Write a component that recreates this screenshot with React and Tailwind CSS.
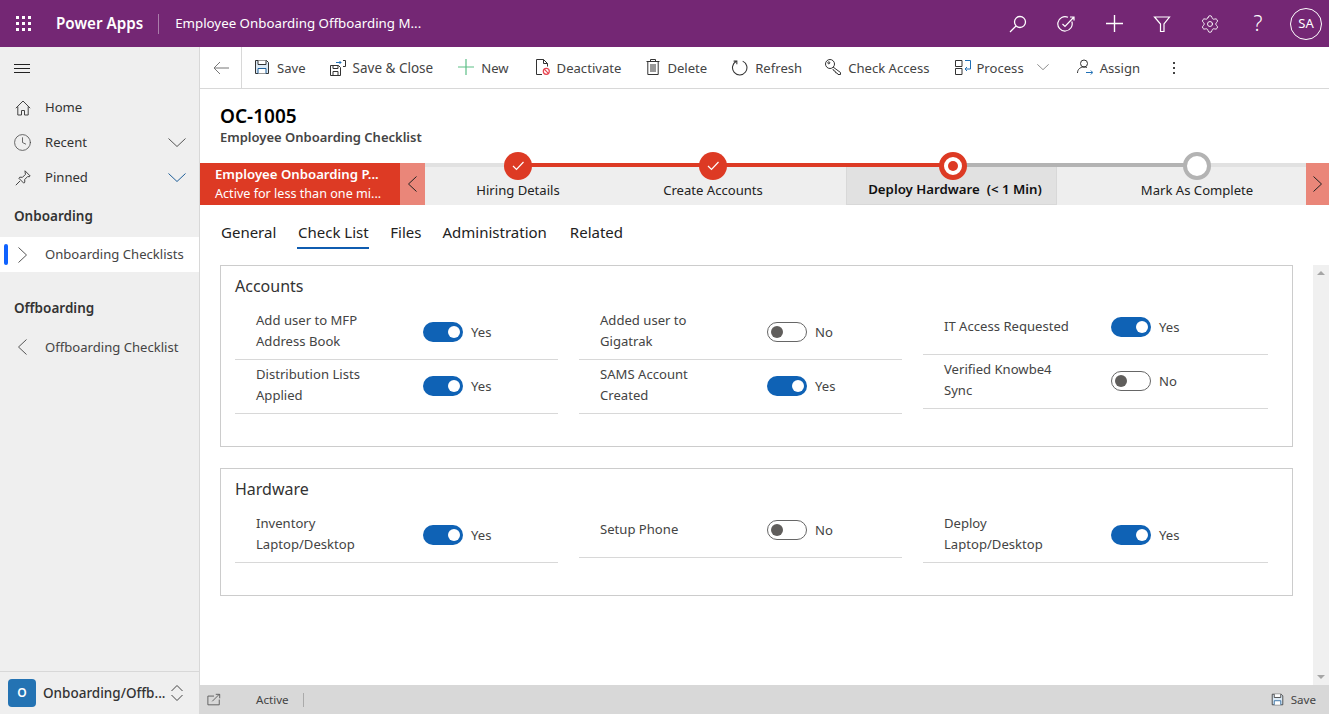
import { Clock, Settings } from 'lucide-react';

const Ico = ({ size = 16, children, className = '' }) => (
  <svg width={size} height={size} viewBox="0 0 16 16" fill="none" stroke="currentColor" strokeWidth="1" className={className}>
    {children}
  </svg>
);

const ChevDown = ({ className = '', width = 18, height = 9 }) => (
  <svg width={width} height={height} viewBox="0 0 18 9" fill="none" stroke="currentColor" className={className}>
    <path d="M.5 .5L9 8.500 17.500 .5" />
  </svg>
);

const ChevRight = ({ className = '' }) => (
  <svg width="9" height="16" viewBox="0 0 9 16" fill="none" stroke="currentColor" className={className}>
    <path d="M.5 .5L8.500 8 .5 15.500" />
  </svg>
);

const ChevLeft = ({ className = '' }) => (
  <svg width="9" height="16" viewBox="0 0 9 16" fill="none" stroke="currentColor" className={className}>
    <path d="M8.500 .5L.5 8l8 7.500" />
  </svg>
);

const PlusIcon = ({ size = 16, className = '', strokeWidth = 1.2 }) => (
  <svg width={size} height={size} viewBox="0 0 16 16" fill="none" stroke="currentColor" strokeWidth={strokeWidth} className={className}>
    <path d="M8 0v16M0 8h16" />
  </svg>
);

const HomeIcon = () => (
  <Ico>
    <path d="M.8 8.200L8 1l7.200 7.200M2.800 6.500v8.500h3.700v-4.500h3v4.500h3.700V6.500" />
  </Ico>
);

const PinIcon = () => (
  <Ico>
    <path d="M10 .8l5.200 5.200-1 .8-1.500-.3-3 3 .1 2.700-1 1-5-5 1-1 2.700.1 3-3-.3-1.500zM5 11L.8 15.200" />
  </Ico>
);

const TrashIcon = () => (
  <svg width="14" height="16" viewBox="0 0 14 16" fill="none" stroke="#333">
    <path d="M.5 2.500h13M4.500 2.500v-2h5v2M1.800 2.500v13h10.400v-13M5 5v8M7 5v8M9 5v8" />
  </svg>
);

const KeyIcon = () => (
  <Ico>
    <circle cx="5" cy="5" r="4.500" stroke="#333" />
    <circle cx="3.800" cy="3.800" r="1" stroke="#333" />
    <path d="M8 8l7.500 5.500v2h-2.500l-1-1.500-1.500-.3-.3-1.500-1.500-.5-.8-1.700" stroke="#333" />
  </Ico>
);

const SaveIcon = ({ size = 16 }) => (
  <Ico size={size}>
    <path d="M1.500 1.500h11l2 2v11h-13z" stroke="#333" fill="#dbe9f5" />
    <path d="M4 1.500v4h8v-4" stroke="#333" fill="#fff" />
    <path d="M4 14.500v-5h8v5" stroke="#1f5f99" fill="#fff" />
  </Ico>
);

const SaveCloseIcon = () => (
  <Ico>
    <path d="M.5 5.500h8l2 2v8H.5z" stroke="#333" />
    <path d="M3 5.500v3h5v-3M3 15.500v-4h5v4" stroke="#333" />
    <path d="M6 2.500h5M9.500 1L11 2.500 9.500 4" stroke="#1f6fb5" />
    <path d="M13 .5h2.500v6H13" stroke="#333" />
  </Ico>
);

const DeactivateIcon = () => (
  <Ico>
    <path d="M8 15.500H2.500V.5h7l4 4v3M9.500 .5v4h4" stroke="#333" />
    <circle cx="12.300" cy="12.300" r="3" stroke="#e8434f" strokeWidth="1.200" />
    <path d="M10.200 10.200l4.200 4.200" stroke="#e8434f" strokeWidth="1.200" />
  </Ico>
);

const RefreshIcon = () => (
  <Ico size={17}>
    <path d="M5 2.200A6.800 6.800 0 1 0 11 2" stroke="#333" />
    <path d="M5.500 5V2H2.500" stroke="#333" />
  </Ico>
);

const ProcessIcon = () => (
  <Ico>
    <path d="M.5 1.500H7v6H.5zM.5 9.500H7v6H.5z" stroke="#333" />
    <path d="M10 1.500h5.500V10H10M12 8l-2 2 2 2" stroke="#1f6fb5" />
  </Ico>
);

const AssignIcon = () => (
  <Ico>
    <circle cx="7" cy="4.500" r="3.500" stroke="#333" />
    <path d="M.5 14c0-3.500 2.500-6 6.500-6 1 0 2 .2 2.800 .6" stroke="#333" />
    <path d="M9 13.500h6.500M13.800 11.500l2 2-2 2" stroke="#1f6fb5" />
  </Ico>
);

const TargetIcon = () => (
  <svg width="18" height="18" viewBox="0 0 18 18" fill="none" stroke="currentColor" strokeWidth="1.2">
    <path d="M14.800 6.500A7.200 7.200 0 1 1 11 2.300" />
    <path d="M5.500 9L8 11.500 16.500 2.500M13 2h4v3.500" />
  </svg>
);

const FunnelIcon = () => (
  <svg width="18" height="18" viewBox="0 0 18 18" fill="none" stroke="currentColor" strokeWidth="1.2">
    <path d="M1.500 2h15L11 9v7.500H7.500V9z" />
  </svg>
);

const SearchIcon = () => (
  <svg width="18" height="18" viewBox="0 0 18 18" fill="none" stroke="currentColor" strokeWidth="1.3">
    <circle cx="11" cy="7" r="5.500" />
    <path d="M7 11l-6 6" />
  </svg>
);

const PopoutIcon = () => (
  <Ico size={14}>
    <path d="M8 3.500H1v10h13v-6" stroke="#555" />
    <path d="M6 9.500L14 1.500M10 1.500h4.500V6" stroke="#555" />
  </Ico>
);

const Cmd = ({ icon, label, className = 'gap-[7px]' }) => (
  <div className={`flex items-center ${className}`}>
    {icon}
    <span className="pt-[2px]">{label}</span>
  </div>
);

const NavItem = ({ icon, label, chevron }) => (
  <div className="flex items-center h-[35px] pl-[15px] pr-[13px]">
    <span className="w-[30px] text-[#444]">{icon}</span>
    <span className="flex-1">{label}</span>
    {chevron}
  </div>
);

const Toggle = ({ on }) =>
  on ? (
    <span className="flex items-center justify-end shrink-0 w-10 h-5 pr-[3px] rounded-full bg-[#0f62b5]">
      <span className="w-3 h-3 rounded-full bg-white" />
    </span>
  ) : (
    <span className="flex items-center shrink-0 w-10 h-5 pl-[3px] rounded-full border border-[#666] bg-white">
      <span className="w-3 h-3 rounded-full bg-[#605e5c]" />
    </span>
  );

const Field = ({ label, on, short }) => (
  <div className={`flex items-center border-b border-[#d8d8d8] ${short ? 'h-[48px] pb-[7px]' : 'h-[53px] pb-[2px]'}`}>
    <div className={`w-[188px] shrink-0 pl-[21px] pr-[35px] leading-[21px] text-[#444] ${short ? 'mb-px' : 'mb-[3px]'}`}>{label}</div>
    <Toggle on={on} />
    <span className="ml-2 pt-px text-[#444]">{on ? 'Yes' : 'No'}</span>
  </div>
);

const Col = ({ children }) => <div className="flex flex-col gap-px">{children}</div>;

const Stage = ({ className, label, node, nodeClass, bold }) => (
  <div className={`relative flex items-center justify-center h-[38px] pt-[9px] ${className} ${bold ? 'font-semibold text-[13.25px] pl-[7px] text-[#111]' : 'text-[#222]'}`}>
    <div className={`absolute top-[-15px] w-7 h-7 rounded-full ${nodeClass}`}>{node}</div>
    <span className="whitespace-pre">{label}</span>
  </div>
);

const DoneCheck = () => (
  <svg viewBox="0 0 28 28" className="w-7 h-7" fill="none" stroke="#fff" strokeWidth="1.2">
    <path d="M9 14l3.500 3.500L19.500 10" />
  </svg>
);

export default function App() {
  return (
    <div className="w-[1329px] h-[714px] overflow-hidden flex flex-col bg-white text-[13.1px] text-[#333] font-['Noto_Sans',sans-serif]">
      <header className="h-[47px] shrink-0 flex items-center bg-[#742774] text-white">
        <div className="grid grid-cols-3 gap-[3px] ml-[16px] w-[15px]">
          {[...Array(9)].map((_, i) => (
            <span key={i} className="w-[3px] h-[3px] bg-white" />
          ))}
        </div>
        <span className="ml-[25px] text-[15.2px] font-semibold">Power Apps</span>
        <span className="ml-[15px] w-px h-5 bg-white/40" />
        <span className="ml-[16px] text-[13.3px]">Employee Onboarding Offboarding M...</span>
        <div className="ml-auto flex items-center h-full">
          <div className="flex items-center justify-center w-12 h-full"><SearchIcon /></div>
          <div className="flex items-center justify-center w-12 h-full"><TargetIcon /></div>
          <div className="flex items-center justify-center w-12 h-full"><PlusIcon size={17} strokeWidth={1.3} /></div>
          <div className="flex items-center justify-center w-12 h-full"><FunnelIcon /></div>
          <div className="flex items-center justify-center w-12 h-full"><Settings size={20} strokeWidth={1.1} /></div>
          <div className="flex items-center justify-center w-12 h-full text-[21px] font-light">?</div>
          <div className="flex items-center justify-center w-8 h-8 ml-2 mr-[7px] rounded-full border border-white text-[13px]">SA</div>
        </div>
      </header>

      <div className="flex flex-1 min-h-0">
        <aside className="w-[200px] shrink-0 flex flex-col bg-[#efefef] border-r border-[#d8d8d8]">
          <div className="flex flex-col gap-[3px] h-[42px] justify-center pl-[14px]">
            <span className="w-4 h-px bg-[#222]" />
            <span className="w-4 h-px bg-[#222]" />
            <span className="w-4 h-px bg-[#222]" />
          </div>
          <div className="mt-[1px]">
            <NavItem icon={<HomeIcon />} label="Home" />
            <NavItem icon={<Clock size={19} strokeWidth={1} className="-ml-[2px]" />} label="Recent" chevron={<ChevDown className="text-[#555]" />} />
            <NavItem icon={<PinIcon />} label="Pinned" chevron={<ChevDown className="text-[#1f5f99]" />} />
          </div>
          <div className="mt-[3px] h-[36px] flex items-center pl-[14px] text-[13.5px] font-semibold text-[#333]">Onboarding</div>
          <div className="relative mt-[3px] flex items-center h-[35px] bg-white pl-[18px]">
            <span className="absolute left-[4px] top-[7px] w-1 h-[21px] rounded-sm bg-[#0f62fe]" />
            <span className="w-[27px] text-[#555]"><ChevRight /></span>
            <span className="pt-px text-[#444]">Onboarding Checklists</span>
          </div>
          <div className="mt-[17px] h-[38px] flex items-center pl-[14px] text-[13.5px] font-semibold text-[#333]">Offboarding</div>
          <div className="flex items-center h-[40px] pl-[18px]">
            <span className="w-[27px] text-[#555]"><ChevLeft /></span>
            <span className="pt-px text-[#444]">Offboarding Checklist</span>
          </div>
          <div className="mt-auto h-[43px] flex items-center pl-[8px] border-t border-[#d8d8d8]">
            <span className="flex items-center justify-center w-7 h-7 rounded-sm bg-[#2473b3] text-white text-[12px] font-semibold">O</span>
            <span className="ml-[7px] text-[13.5px] font-medium">Onboarding/Offb...</span>
            <svg width="14" height="18" viewBox="0 0 14 18" fill="none" stroke="#444" className="ml-auto mr-[15px]">
              <path d="M1.500 7L7 1.500 12.500 7M1.500 11L7 16.500 12.500 11" />
            </svg>
          </div>
        </aside>

        <main className="flex-1 min-w-0 flex flex-col">
          <div className="h-[42px] shrink-0 flex items-center border-b border-[#d8d8d8] text-[#444]">
            <div className="flex items-center justify-center w-[42px] h-full border-r border-[#d8d8d8] text-[#777]">
              <svg width="16" height="14" viewBox="0 0 16 14" fill="none" stroke="currentColor">
                <path d="M16 7H1M7 1L1 7l6 6" />
              </svg>
            </div>
            <div className="flex items-center gap-[24px] ml-[12px]">
              <Cmd icon={<SaveIcon />} label="Save" />
              <Cmd icon={<SaveCloseIcon />} label="Save & Close" className="gap-[7px] text-[13.5px]" />
              <Cmd icon={<PlusIcon className="text-[#5cbf86]" />} label="New" className="gap-[7px] ml-px" />
              <Cmd icon={<DeactivateIcon />} label="Deactivate" className="gap-[7px] ml-px" />
              <Cmd icon={<TrashIcon />} label="Delete" className="gap-[7px] ml-px" />
              <Cmd icon={<RefreshIcon />} label="Refresh" />
              <Cmd icon={<KeyIcon />} label="Check Access" className="gap-[7px] -ml-px" />
              <div className="flex items-center gap-[13px] ml-[2px]">
                <Cmd icon={<ProcessIcon />} label="Process" className="gap-[5px]" />
                <ChevDown width={12} height={6} className="text-[#555]" />
              </div>
              <Cmd icon={<AssignIcon />} label="Assign" className="gap-[7px] ml-[4px]" />
              <span className="flex flex-col gap-[3px] ml-[9px]">
                <span className="w-[2px] h-[2px] bg-[#444]" />
                <span className="w-[2px] h-[2px] bg-[#444]" />
                <span className="w-[2px] h-[2px] bg-[#444]" />
              </span>
            </div>
          </div>

          <div className="h-[74px] shrink-0 pl-[20px] pt-[15px]">
            <div className="text-[19px] leading-[24px] font-semibold text-black">OC-1005</div>
            <div className="text-[13px] leading-[19px] font-semibold text-[#444]">Employee Onboarding Checklist</div>
          </div>

          <div className="h-[42px] shrink-0 flex">
            <div className="w-[200px] flex flex-col justify-center pl-[15px] bg-[#dd3a24] text-white leading-[19px]">
              <span className="text-[13.2px] font-semibold">Employee Onboarding P...</span>
              <span className="text-[12.6px]">Active for less than one mi...</span>
            </div>
            <div className="flex items-center justify-center w-[25px] bg-[#ea8679] text-[#222]">
              <ChevLeft />
            </div>
            <div className="flex-1 flex flex-col min-w-0">
              <div className="h-[4px] flex">
                <span className="w-[93px] bg-[#e1e1e1]" />
                <span className="w-[435px] bg-[#dd3a24]" />
                <span className="w-[244px] bg-[#b3b3b3]" />
                <span className="flex-1 bg-[#e1e1e1]" />
              </div>
              <div className="flex bg-[#eeeeee]">
                <Stage className="w-[186px]" label="Hiring Details" nodeClass="bg-[#dd3a24]" node={<DoneCheck />} />
                <Stage className="w-[204px]" label="Create Accounts" nodeClass="bg-[#dd3a24]" node={<DoneCheck />} />
                <Stage
                  className="w-[211px] ml-[31px] bg-[#e1e1e1] border-b border-r border-l border-[#d8d8d8]"
                  label="Deploy Hardware  (< 1 Min)"
                  bold
                  nodeClass="left-[92px] border-[5px] border-[#dd3a24] bg-white flex items-center justify-center"
                  node={<span className="w-[10px] h-[10px] rounded-full bg-[#dd3a24]" />}
                />
                <Stage className="w-[218px] ml-[31px]" label="Mark As Complete" nodeClass="border-[4px] border-[#b3b3b3] bg-white" />
              </div>
            </div>
            <div className="flex items-center justify-center w-[23px] bg-[#ea8679] text-[#222]">
              <ChevRight />
            </div>
          </div>

          <div className="h-[60px] shrink-0 flex items-start gap-[21px] pl-[21px] pt-[16px] text-[15px] text-[#222]">
            <span className="h-[28px]">General</span>
            <span className="h-[28px] w-[72px] text-center border-b-2 border-[#0f5cb0]">Check List</span>
            <span className="h-[28px]">Files</span>
            <span className="h-[28px]">Administration</span>
            <span className="h-[28px] ml-[2px]">Related</span>
          </div>

          <div className="flex-1 min-h-0 flex">
            <div className="flex-1 min-w-0 pl-[20px] pr-[20px] flex flex-col gap-[21px]">
              <section className="border border-[#cccccc] px-[14px] pb-[32px]">
                <h2 className="h-[41px] pb-[2px] flex items-center text-[16px] text-[#333]">Accounts</h2>
                <div className="grid grid-cols-[323px_323px_345px] gap-x-[21px]">
                  <Col>
                    <Field label="Add user to MFP Address Book" on />
                    <Field label="Distribution Lists Applied" on />
                  </Col>
                  <Col>
                    <Field label="Added user to Gigatrak" />
                    <Field label="SAMS Account Created" on />
                  </Col>
                  <Col>
                    <Field label="IT Access Requested" on short />
                    <Field label="Verified Knowbe4 Sync" />
                  </Col>
                </div>
              </section>
              <section className="border border-[#cccccc] px-[14px] pb-[32px]">
                <h2 className="h-[41px] pb-[2px] flex items-center text-[16px] text-[#333]">Hardware</h2>
                <div className="grid grid-cols-[323px_323px_345px] gap-x-[21px]">
                  <Field label="Inventory Laptop/Desktop" on />
                  <div><Field label="Setup Phone" short /></div>
                  <Field label="Deploy Laptop/Desktop" on />
                </div>
              </section>
            </div>
            <div className="w-4 shrink-0 flex flex-col items-center justify-between py-[6px] bg-[#f0f0f0]">
              <span className="w-0 h-0 border-x-[4px] border-x-transparent border-b-[4px] border-b-[#a6a6a6]" />
              <span className="w-0 h-0 border-x-[4px] border-x-transparent border-t-[4px] border-t-[#a6a6a6]" />
            </div>
          </div>

          <footer className="h-[29px] shrink-0 flex items-center bg-[#d8d8d8] text-[11.6px] text-[#444]">
            <span className="ml-[7px]"><PopoutIcon /></span>
            <span className="ml-[35px]">Active</span>
            <span className="ml-[14px] w-px h-[14px] bg-[#aaa]" />
            <div className="ml-auto mr-[13px] flex items-center gap-[7px]">
              <SaveIcon size={13} />
              <span>Save</span>
            </div>
          </footer>
        </main>
      </div>
    </div>
  );
}
